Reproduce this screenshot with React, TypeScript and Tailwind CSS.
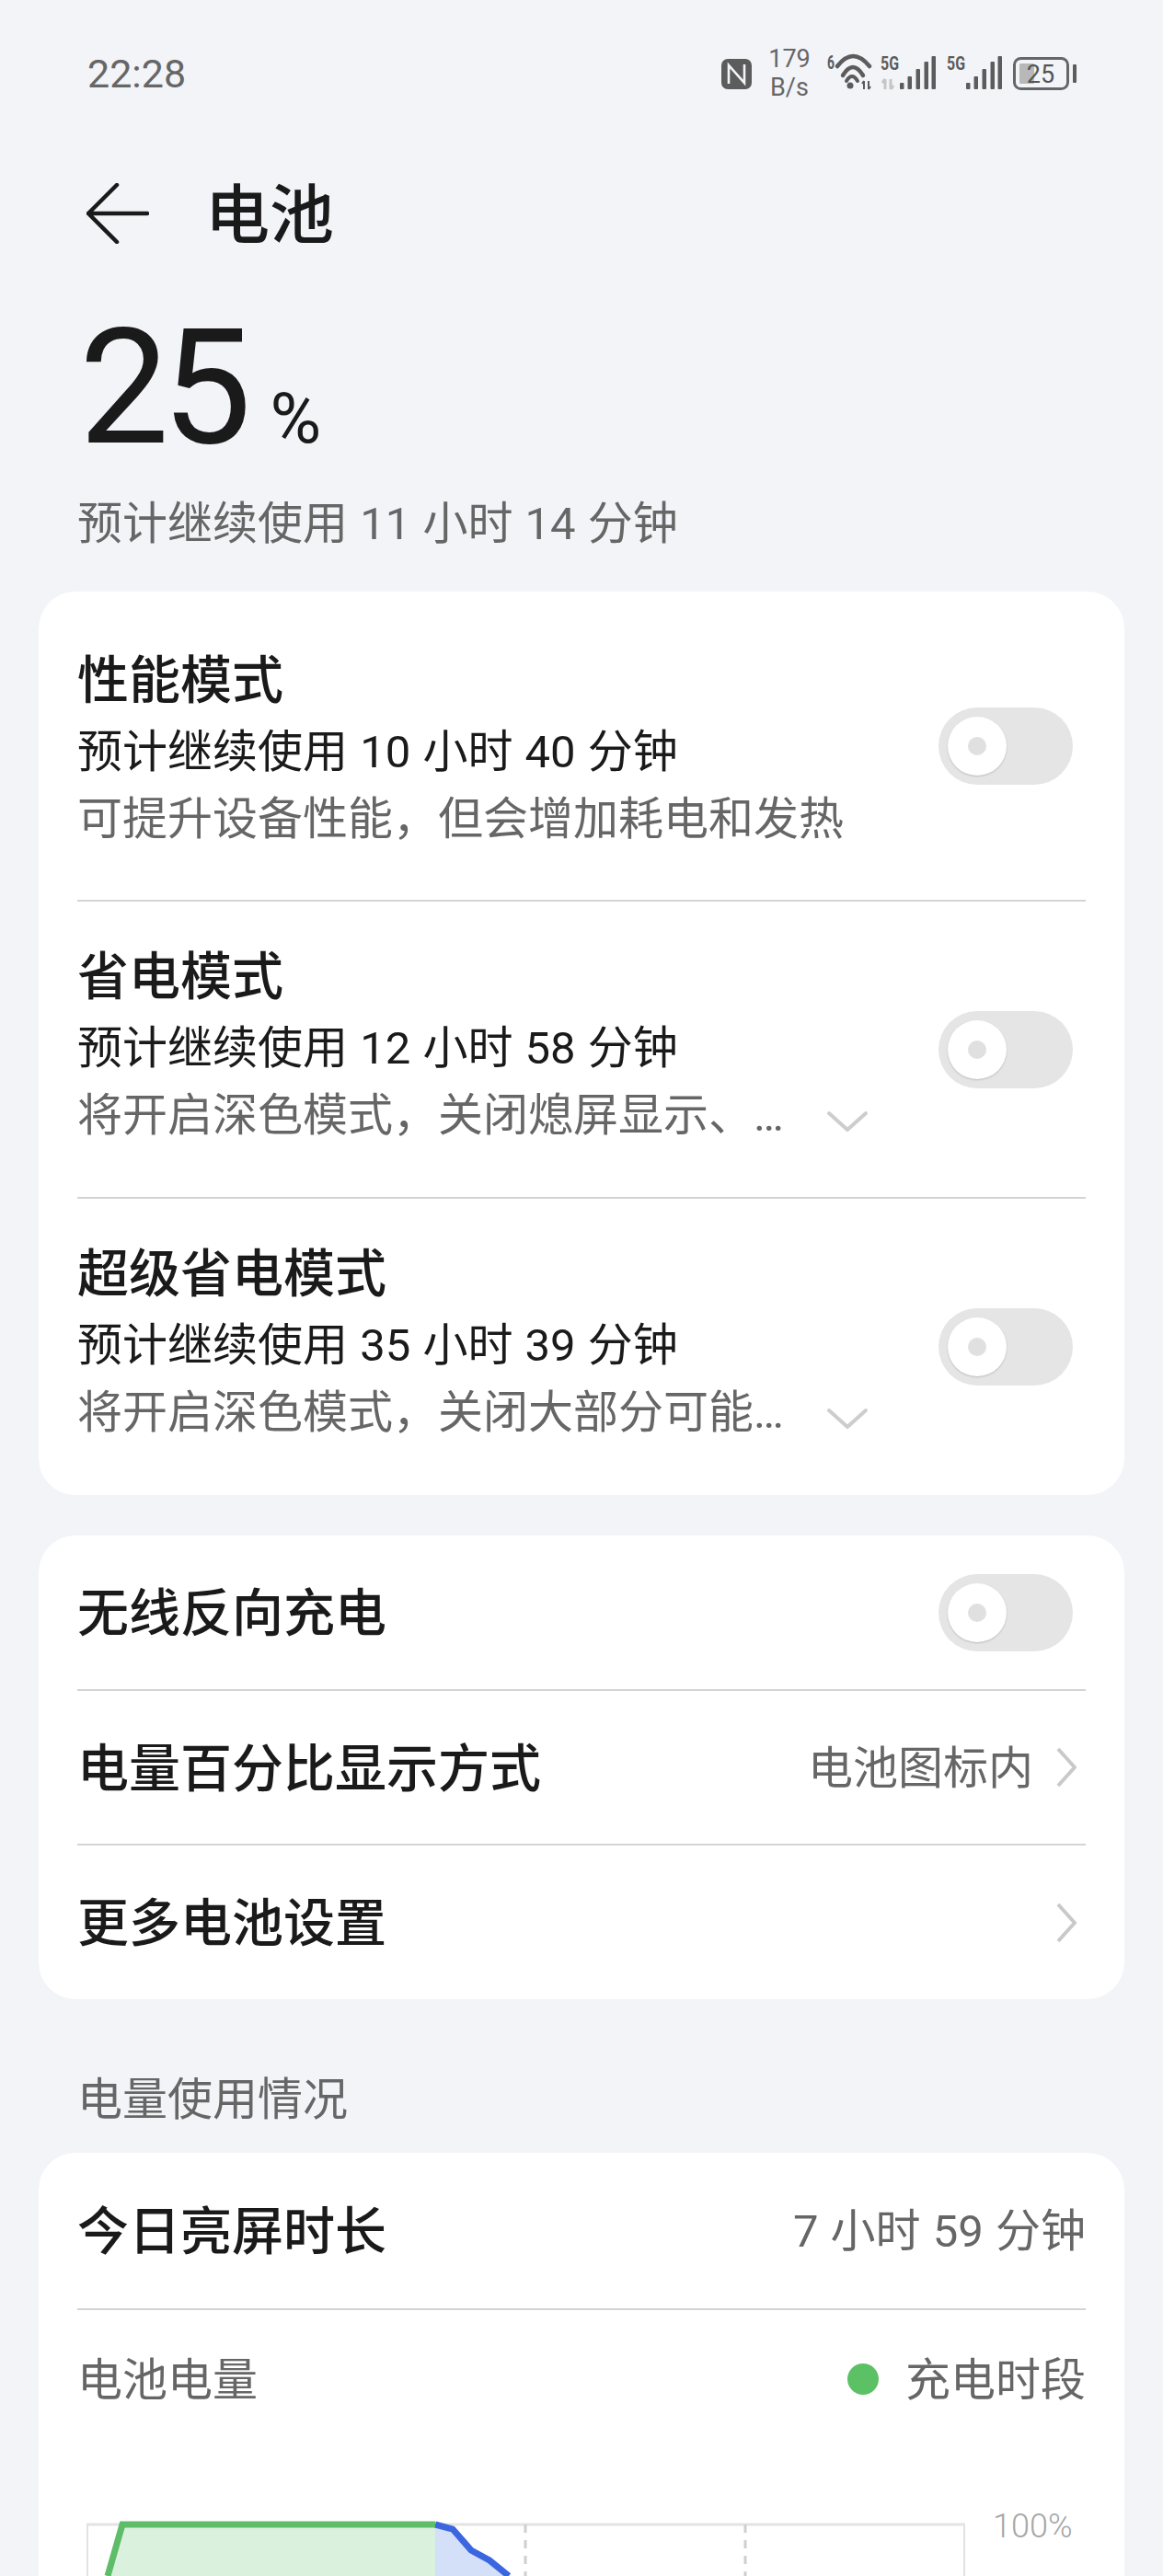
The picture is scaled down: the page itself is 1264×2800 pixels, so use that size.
const fontStack = { fontFamily: 'Roboto, "Noto Sans CJK SC", sans-serif' }

const Bars = () => (
  <>
    <rect x="21" y="29" width="4.5" height="7" rx="1" fill="#5c5c5c" />
    <rect x="29.5" y="22" width="4.5" height="14" rx="1" fill="#5c5c5c" />
    <rect x="38.5" y="14" width="4.5" height="22" rx="1" fill="#5c5c5c" />
    <rect x="47.5" y="6" width="4.5" height="30" rx="1" fill="#5c5c5c" />
    <rect x="55.5" y="0" width="4.5" height="36" rx="1" fill="#5c5c5c" />
    <text x="0" y="15" fontSize="21" fontWeight="700" fill="#5c5c5c" textLength="20" lengthAdjust="spacingAndGlyphs">
      5G
    </text>
  </>
)

const StatusBar = () => (
  <div className="flex h-[160px] items-center justify-between pl-[95px] pr-[94px]">
    <span className="text-[43px] leading-none text-[#666666]">22:28</span>
    <div className="flex items-center">
      <svg width="33" height="33" viewBox="0 0 33 33">
        <rect width="33" height="33" rx="7" fill="#5c5c5c" />
        <path d="M8 27V7l17 19V6" fill="none" stroke="#f2f4f8" strokeWidth="2.6" />
      </svg>
      <div className="ml-[19px] flex w-[44px] flex-col items-center text-[27px] leading-[31px] text-[#666666]">
        <span>179</span>
        <span>B/s</span>
      </div>
      <svg className="ml-[19px]" width="49" height="80" viewBox="0 -20 49 80">
        <text x="0" y="15" fontSize="21" fontWeight="700" fill="#5c5c5c" textLength="8" lengthAdjust="spacingAndGlyphs">
          6
        </text>
        <path d="M11 12Q28-10 46 12" fill="none" stroke="#5c5c5c" strokeWidth="4.5" strokeLinecap="round" />
        <path d="M17 22Q28 4 39 22" fill="none" stroke="#5c5c5c" strokeWidth="4.5" strokeLinecap="round" />
        <path d="M21 28Q27 18 33 28" fill="none" stroke="#5c5c5c" strokeWidth="4" strokeLinecap="round" />
        <circle cx="25" cy="33" r="3.5" fill="#5c5c5c" />
        <path d="M40 28v9M40 28l-2 3M45 37v-9M45 37l2-3" fill="none" stroke="#5c5c5c" strokeWidth="2" />
      </svg>
      <svg className="ml-[9px]" width="60" height="50" viewBox="0 -6 60 50">
        <Bars />
        <path d="M5 25v11M5 25l-3 4M11 36V25M11 36l3-4" fill="none" stroke="#c6c6c6" strokeWidth="3" />
      </svg>
      <svg className="ml-[12px]" width="60" height="50" viewBox="0 -6 60 50">
        <Bars />
      </svg>
      <svg className="ml-[12px]" width="69" height="36" viewBox="0 0 69 36">
        <rect x="1.5" y="1.5" width="58" height="33" rx="7" fill="none" stroke="#666666" strokeWidth="3" />
        <rect x="7" y="7" width="16" height="22" rx="1" fill="#b8b8b8" />
        <rect x="65" y="8" width="4" height="20" rx="1" fill="#5c5c5c" />
        <text x="30" y="28" textAnchor="middle" fontSize="27" fill="#555555">
          25
        </text>
      </svg>
    </div>
  </div>
)

const Toggle = () => (
  <div className="flex h-[84px] w-[146px] shrink-0 items-center rounded-full bg-[#e5e5e5] pl-[10px]">
    <div className="flex h-[64px] w-[64px] items-center justify-center rounded-full bg-white shadow-[0_1px_2px_rgba(0,0,0,0.18)]">
      <div className="h-[20px] w-[20px] rounded-full bg-[#e0e0e0]" />
    </div>
  </div>
)

const ChevronRight = () => (
  <svg width="22" height="44" viewBox="0 0 22 44" className="shrink-0">
    <path d="M2 2l18 20L2 42" fill="none" stroke="#c9c9c9" strokeWidth="4" strokeLinejoin="round" />
  </svg>
)

const ChevronDown = () => (
  <svg width="46" height="24" viewBox="0 0 46 24" className="shrink-0">
    <path d="M3 3l20 18L43 3" fill="none" stroke="#cdcdcd" strokeWidth="4" strokeLinecap="round" strokeLinejoin="round" />
  </svg>
)

const Divider = () => <div className="h-[2px] bg-[#d4d4d4]" />

type ModeProps = { title: string; estimate: string; desc: string; more?: boolean; className: string; textClass: string }

const ModeRow = ({ title, estimate, desc, more, className, textClass }: ModeProps) => (
  <div className={`flex items-center justify-between ${className}`}>
    <div className={`min-w-0 ${textClass}`}>
      <div className="mb-[5px] text-[56px] font-medium leading-[70px] text-[#1a1a1a]">{title}</div>
      <div className="text-[49px] leading-[76px] text-[#1a1a1a] [word-spacing:1px]">{estimate}</div>
      <div className="flex items-center text-[49px] leading-[70px] text-[#666666]">
        <span className="whitespace-nowrap">{desc}</span>
        {more && (
          <span className="ml-[46px] mt-[12px]">
            <ChevronDown />
          </span>
        )}
      </div>
    </div>
    <div className="mr-[14px]">
      <Toggle />
    </div>
  </div>
)

const Chart = () => (
  <div className="mt-[62px] h-[220px] pl-[10px]">
    <svg width="1128" height="210" viewBox="0 -10 1128 210" className="block">
      <path d="M1 11V200M954 11V200" fill="none" stroke="#e2e2e2" strokeWidth="2" />
      <path d="M0 11H955" fill="none" stroke="#e3e3e3" strokeWidth="3" />
      <path d="M239 11V200M477 11V200M716 11V200" fill="none" stroke="#cfcfcf" strokeWidth="3" strokeDasharray="9 8" />
      <path d="M23 67L39 11H379V200H23Z" fill="#daf1de" />
      <path d="M379 11L398 16 418 39 438 50 459 67V200H379Z" fill="#d3e0f8" />
      <path d="M379 11L398 16 418 39 438 50 459 67" fill="none" stroke="#3b66e0" strokeWidth="7" />
      <path d="M23 67L39 11H379" fill="none" stroke="#5dbd68" strokeWidth="7" />
      <text x="985" y="25" fontSize="36" fontWeight="300" fill="#a6a6a6">
        100%
      </text>
    </svg>
  </div>
)

export default function App() {
  return (
    <div className="h-[2800px] w-[1264px] overflow-hidden bg-[#f2f4f8]" style={fontStack}>
      <StatusBar />

      <div className="flex h-[144px] items-center pl-[94px]">
        <svg width="68" height="66" viewBox="0 0 68 66">
          <path d="M66 33H2M33 2L2 33l31 31" fill="none" stroke="#1a1a1a" strokeWidth="4.5" strokeLinecap="round" strokeLinejoin="round" />
        </svg>
        <span className="ml-[61px] mt-[5px] text-[70px] font-medium leading-none text-[#1a1a1a]">电池</span>
      </div>

      <div className="flex h-[231px] items-baseline pl-[86px] pt-[33px] text-[#1a1a1a]">
        <span className="text-[174px] leading-[170px] tracking-[-8px]">25</span>
        <span className="ml-[28px] text-[76px] leading-none">%</span>
      </div>

      <div className="pl-[84px] text-[49px] leading-[70px] text-[#666666] [word-spacing:1px]">预计继续使用 11 小时 14 分钟</div>

      <div className="mx-[42px] mt-[38px] rounded-[40px] bg-white px-[42px]">
        <ModeRow className="h-[335px]" textClass="mt-[9px]" title="性能模式" estimate="预计继续使用 10 小时 40 分钟" desc="可提升设备性能，但会增加耗电和发热" />
        <Divider />
        <ModeRow className="h-[321px]" textClass="mb-[7px]" title="省电模式" estimate="预计继续使用 12 小时 58 分钟" desc="将开启深色模式，关闭熄屏显示、…" more />
        <Divider />
        <ModeRow className="h-[322px]" textClass="mb-[7px]" title="超级省电模式" estimate="预计继续使用 35 小时 39 分钟" desc="将开启深色模式，关闭大部分可能…" more />
      </div>

      <div className="mx-[42px] mt-[44px] rounded-[40px] bg-white px-[42px]">
        <div className="flex h-[167px] items-center justify-between pr-[14px]">
          <span className="mt-[3px] text-[56px] font-medium text-[#1a1a1a]">无线反向充电</span>
          <Toggle />
        </div>
        <Divider />
        <div className="flex h-[166px] items-center justify-between pr-[10px]">
          <span className="mt-[3px] text-[56px] font-medium text-[#1a1a1a]">电量百分比显示方式</span>
          <div className="flex items-center gap-[25px] text-[49px] text-[#666666]">
            <span className="mt-[3px]">电池图标内</span>
            <ChevronRight />
          </div>
        </div>
        <Divider />
        <div className="flex h-[167px] items-center justify-between pr-[10px]">
          <span className="mt-[3px] text-[56px] font-medium text-[#1a1a1a]">更多电池设置</span>
          <ChevronRight />
        </div>
      </div>

      <div className="h-[167px] pl-[84px] pt-[75px] text-[49px] leading-[70px] text-[#666666]">电量使用情况</div>

      <div className="mx-[42px] rounded-t-[40px] bg-white px-[42px]">
        <div className="flex h-[169px] items-center justify-between">
          <span className="mt-[3px] text-[56px] font-medium text-[#1a1a1a]">今日亮屏时长</span>
          <span className="mt-[3px] text-[49px] text-[#666666] [word-spacing:1px]">7 小时 59 分钟</span>
        </div>
        <Divider />
        <div className="flex h-[150px] items-center justify-between text-[49px] text-[#666666]">
          <span className="mt-[3px]">电池电量</span>
          <div className="flex items-center gap-[29px]">
            <div className="h-[34px] w-[34px] rounded-full bg-[#5cc065]" />
            <span className="mt-[3px]">充电时段</span>
          </div>
        </div>
        <Chart />
      </div>
    </div>
  )
}
